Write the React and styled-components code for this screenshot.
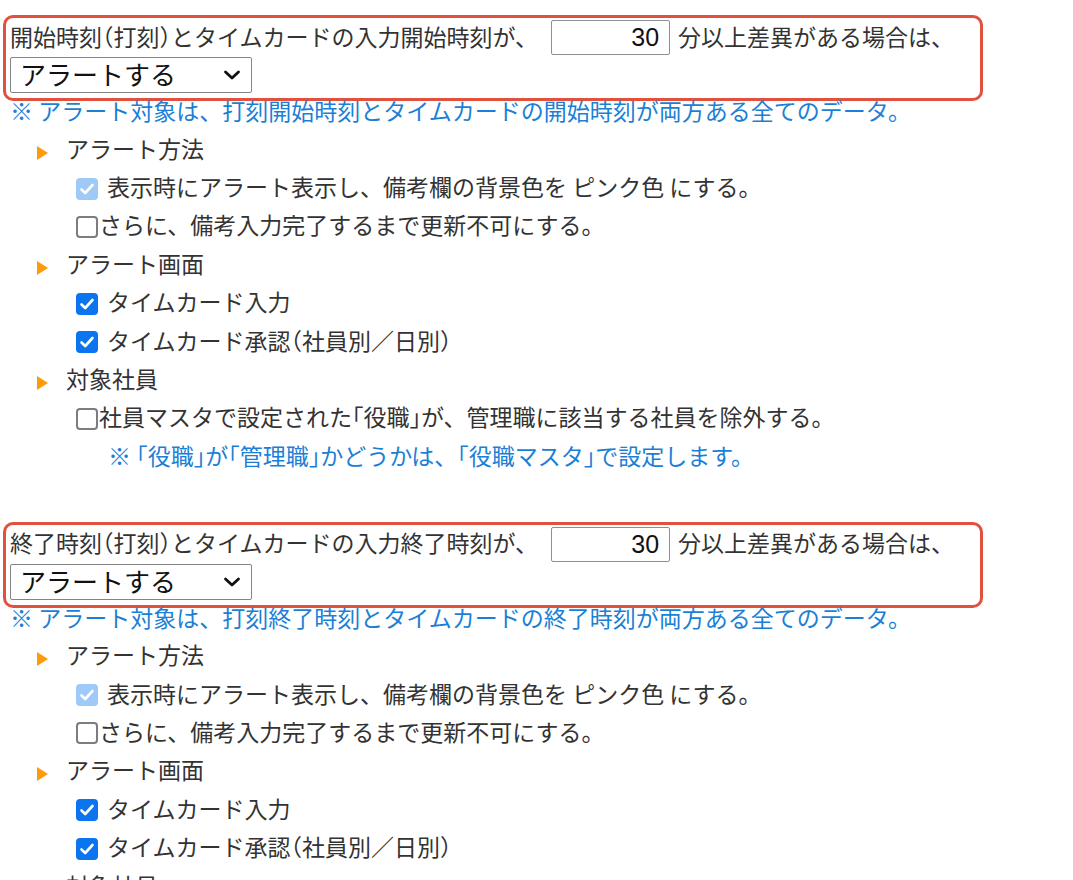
import React from "react";
import styled, { createGlobalStyle } from "styled-components";

const GlobalStyle = createGlobalStyle`
	body {
		margin: 0;
		background: #fff;
		font-family: "Noto Sans CJK JP", "Noto Sans", sans-serif;
		font-size: 23px;
		color: #333;
	}
`

const Page = styled.div`
	padding: 15px 0 0 3px;
`

const Section = styled.div`
	margin-bottom: 45px;
`

const AlertBox = styled.div`
	box-sizing: border-box;
	width: 980px;
	height: 86px;
	border: 3px solid #e2503e;
	border-radius: 10px;
	padding: 1px 4px 5px;
`

const ConditionLine = styled.div`
	display: flex;
	align-items: center;
	height: 37px;
	white-space: nowrap;
`

const Label = styled.span`
	padding-bottom: ${p => p.$lift ?? 5}px;
`

// 括弧だけ半角幅にする
const Punct = styled.span`
	font-feature-settings: "halt";
`

const MinutesInput = styled.div`
	box-sizing: border-box;
	width: 119px;
	height: 35px;
	margin: 0 8px 0 13px;
	padding-right: 10px;
	border: 1px solid #8f8f8f;
	border-radius: 2px;
	display: flex;
	align-items: center;
	justify-content: flex-end;
	font-family: "Liberation Sans", Arial, sans-serif;
	font-size: 25px;
	color: #111;
`

const SelectBox = styled.div`
	box-sizing: border-box;
	width: 242px;
	height: 36px;
	margin-top: 1px;
	border: 1px solid #858585;
	border-radius: 2px;
	padding: 0 10px 0 9px;
	display: flex;
	align-items: center;
	justify-content: space-between;
	font-size: 26px;
	color: #111;
`

const Note = styled.div`
	color: #1b7fd6;
	line-height: 24px;
	height: 24px;
	padding-left: 7px;
	white-space: nowrap;
	margin-top: -3px;
	margin-bottom: 3px;
`

const List = styled.div`
	padding-top: 6px;
`

const Row = styled.div`
	display: flex;
	align-items: center;
	height: 38.4px;
	padding-left: ${p => p.$indent}px;
	white-space: nowrap;
	color: ${p => (p.$blue ? "#1b7fd6" : "#333")};
`

const Arrow = styled.span`
	width: 0;
	height: 0;
	border-left: 11px solid #ff9a08;
	border-top: 7.5px solid transparent;
	border-bottom: 7.5px solid transparent;
	margin: 5px 18px 0 0;
`

const Box = styled.span`
	box-sizing: border-box;
	width: 22px;
	height: 22px;
	border-radius: 4px;
	margin-right: ${p => p.$gap}px;
	display: flex;
	align-items: center;
	justify-content: center;
	flex-shrink: 0;
	background: ${p => (p.$state === "on" ? "#0b74ef" : p.$state === "dim" ? "#9fc9f6" : "#fff")};
	border: ${p => (p.$state === "off" ? "2px solid #7d7d7d" : "none")};
`

const Check = ({ state, gap }) => (
	<Box $state={state} $gap={gap}>
		{state !== "off" && (
			<svg width="16" height="14" viewBox="0 0 16 14">
				<path d="M2.5 7.5 L6.2 11 L13.5 3" fill="none" stroke="#fff" strokeWidth="2.6" strokeLinecap="round" strokeLinejoin="round" />
			</svg>
		)}
	</Box>
)

const Heading = ({ children }) => (
	<Row $indent={34}>
		<Arrow />
		<Label>{children}</Label>
	</Row>
)

const CheckRow = ({ state, gap, children }) => (
	<Row $indent={73}>
		<Check state={state} gap={gap} />
		<Label>{children}</Label>
	</Row>
)

const AlertSection = ({ kind }) => (
	<Section>
		<AlertBox>
			<ConditionLine>
				<Label $lift={4}>
					{kind}時刻<Punct>（</Punct>打刻<Punct>）</Punct>とタイムカードの入力{kind}時刻が、
				</Label>
				<MinutesInput>30</MinutesInput>
				<Label $lift={4}>分以上差異がある場合は、</Label>
			</ConditionLine>
			<SelectBox>
				<Label $lift={3}>アラートする</Label>
				<svg width="18" height="12" viewBox="0 0 18 12">
					<path d="M2.5 3 L9 9 L15.5 3" fill="none" stroke="#111" strokeWidth="2.8" strokeLinecap="round" strokeLinejoin="round" />
				</svg>
			</SelectBox>
		</AlertBox>
		<Note>※ アラート対象は、打刻{kind}時刻とタイムカードの{kind}時刻が両方ある全てのデータ。</Note>
		<List>
			<Heading>アラート方法</Heading>
			<CheckRow state="dim" gap={9}>表示時にアラート表示し、備考欄の背景色を ピンク色 にする。</CheckRow>
			<CheckRow state="off" gap={1}>さらに、備考入力完了するまで更新不可にする。</CheckRow>
			<Heading>アラート画面</Heading>
			<CheckRow state="on" gap={9}>タイムカード入力</CheckRow>
			<CheckRow state="on" gap={9}>
				タイムカード承認<Punct>（</Punct>社員別／日別<Punct>）</Punct>
			</CheckRow>
			<Heading>対象社員</Heading>
			<CheckRow state="off" gap={1}>
				社員マスタで設定された<Punct>「</Punct>役職<Punct>」</Punct>が、管理職に該当する社員を除外する。
			</CheckRow>
			<Row $indent={105} $blue>
				<Label>
					※ <Punct>「</Punct>役職<Punct>」</Punct>が<Punct>「</Punct>管理職<Punct>」</Punct>かどうかは、<Punct>「</Punct>役職マスタ<Punct>」</Punct>で設定します。
				</Label>
			</Row>
		</List>
	</Section>
)

const App = () => {
	return (
		<Page>
			<GlobalStyle />
			<AlertSection kind="開始" />
			<AlertSection kind="終了" />
		</Page>
	)
}

export default App
